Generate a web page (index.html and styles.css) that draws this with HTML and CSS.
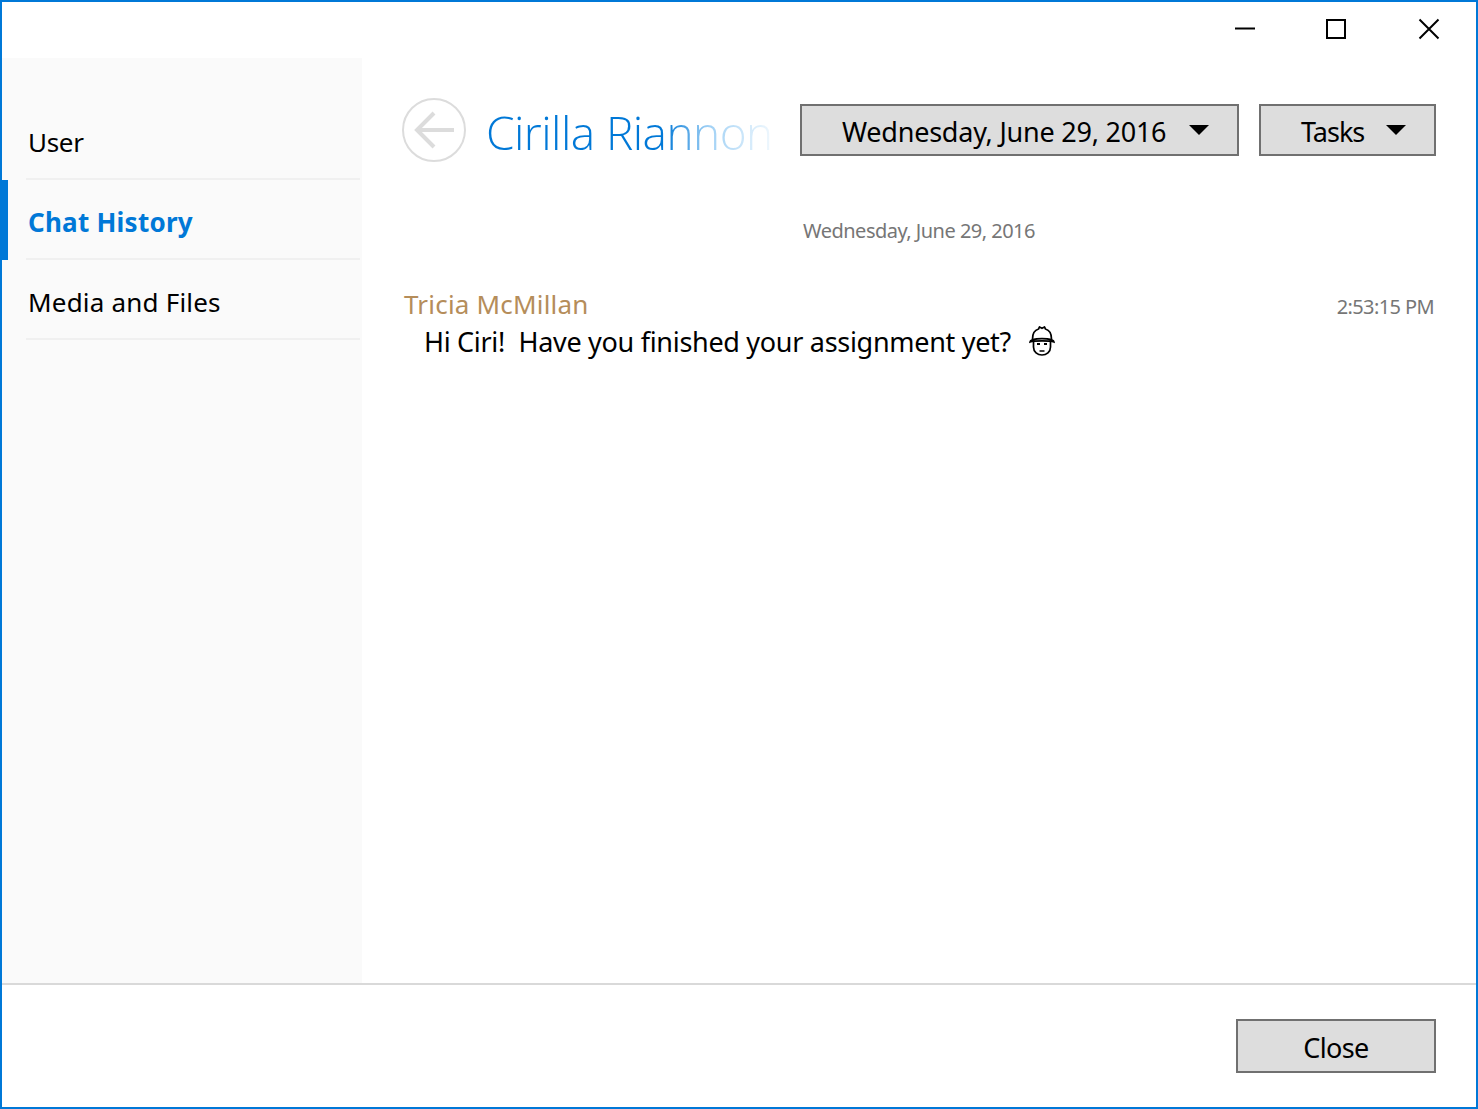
FILE: index.html
```html
<!DOCTYPE html>
<html lang="en">
<head>
<meta charset="utf-8">
<title>Chat History</title>
<link rel="stylesheet" href="styles.css">
</head>
<body>
<div class="window">
  <div class="titlebar">
    <button class="winbtn" aria-label="Minimize"><svg width="22" height="22" viewBox="0 0 22 22"><path d="M3 10.500h20" stroke="#000" stroke-width="2"/></svg></button>
    <button class="winbtn" aria-label="Maximize"><svg width="22" height="22" viewBox="0 0 22 22"><rect x="2" y="2" width="18" height="18" fill="none" stroke="#000" stroke-width="2"/></svg></button>
    <button class="winbtn" aria-label="Close window"><svg width="22" height="22" viewBox="0 0 22 22"><path d="M1.500 1.500l19 19M20.500 1.500l-19 19" stroke="#000" stroke-width="2"/></svg></button>
  </div>
  <div class="body">
    <nav class="sidebar">
      <div class="navitem">User</div>
      <div class="navitem active">Chat History</div>
      <div class="navitem">Media and Files</div>
    </nav>
    <main class="content">
      <header class="header">
        <div class="back"><svg width="64" height="64" viewBox="0 0 64 64"><circle cx="32" cy="32" r="31" fill="none" stroke="#dcdcdc" stroke-width="2"/><path d="M52 32H16M32 15L15 32l17 17" fill="none" stroke="#dcdcdc" stroke-width="4"/></svg></div>
        <h1 class="name">Cirilla Riannon</h1>
        <button class="combo date"><span>Wednesday, June 29, 2016</span><i class="caret"></i></button>
        <button class="combo tasks"><span>Tasks</span><i class="caret"></i></button>
      </header>
      <div class="daystamp">Wednesday, June 29, 2016</div>
      <div class="msg">
        <div class="msghead"><span class="sender">Tricia McMillan</span><span class="time">2:53:15 PM</span></div>
        <div class="msgtext"><span class="msgcopy">Hi Ciri!&nbsp; Have you finished your assignment yet?</span>
          <svg class="emoji" width="28" height="32" viewBox="0 0 28 32"><g fill="none" stroke="#000" stroke-width="1.700"><path d="M4.500 13C4.500 7 7 4 10.500 3L11.500 1 14 2.200 16.500 1 17.500 3C21 4 23.500 7 23.500 13"/><path d="M2 16C2 11.500 26 11.500 26 16 22 14.500 6 14.500 2 16z"/><path d="M5.500 16v5c0 5 4 8 8.500 8s8.500-3 8.500-8v-5"/></g><path d="M9 17h3v2H9zM16 17h3v2h-3z"/><path d="M11.500 25h5" stroke="#000" stroke-width="1.500"/></svg>
        </div>
      </div>
    </main>
  </div>
  <footer class="footer"><button class="combo close">Close</button></footer>
</div>
</body>
</html>
```
FILE: styles.css
```css
* { box-sizing: border-box; }
html, body { margin: 0; padding: 0; }
body { width: 1478px; height: 1109px; background: #fff; font-family: "Noto Sans", "Open Sans", sans-serif; color: #000; overflow: hidden; }
.window { width: 1478px; height: 1109px; border: 2px solid #0078d7; display: flex; flex-direction: column; position: relative; }
.titlebar { height: 56px; flex: none; display: flex; justify-content: flex-end; gap: 71px; padding: 16px 36px 0 0; }
.winbtn { width: 22px; height: 22px; padding: 0; border: 0; background: none; display: block; }
.winbtn svg { display: block; overflow: visible; }
.body { flex: 1; display: flex; min-height: 0; }
.sidebar { width: 360px; flex: none; background: #fafafa; padding-top: 42px; }
.navitem { height: 80px; margin-left: 24px; margin-right: 2px; border-bottom: 2px solid #f0f0f0; font-size: 26px; letter-spacing: 0.2px; padding: 24px 0 0 2px; line-height: 36px; position: relative; }
.navitem:first-child { letter-spacing: -0.3px; }
.navitem.active { color: #0078d7; font-weight: 700; letter-spacing: 0.25px; }
.navitem.active::before { content: ""; position: absolute; left: -26px; top: 0; width: 8px; height: 80px; background: #0078d7; }
.content { flex: 1; padding: 40px 40px 0 40px; min-width: 0; }
.header { display: flex; align-items: flex-start; height: 64px; }
.back { width: 64px; height: 64px; flex: none; }
.back svg { display: block; }
.name { width: 285px; height: 64px; margin: 0 29px 0 20px; flex: none; font-family: "Open Sans", sans-serif; font-weight: 300; font-size: 46px; letter-spacing: -0.55px; line-height: 69px; white-space: nowrap; overflow: hidden; background: linear-gradient(90deg, #0078d7 0, #0078d7 178px, #9fd0f5 222px, #ecf6fd 283px, #fff 285px); -webkit-background-clip: text; background-clip: text; color: transparent; }
.combo { height: 52px; background: #dddddd; border: 2px solid #707070; font: inherit; font-size: 27px; color: #000; padding: 0; letter-spacing: -0.65px; }
.header .combo { margin-top: 6px; display: flex; align-items: center; flex: none; line-height: 50px; padding-top: 4px; }
.date { width: 439px; padding-left: 40px; margin-right: 20px; letter-spacing: -0.23px; }
.tasks { width: 177px; padding-left: 40px; letter-spacing: -1px; }
.date .caret { margin-left: 23px; }
.tasks .caret { margin-left: 22px; }
.caret { display: block; width: 0; height: 0; border-left: 10px solid transparent; border-right: 10px solid transparent; border-top: 10px solid #000; margin-top: -4px; flex: none; }
.daystamp { margin-top: 54px; text-align: center; font-size: 20px; line-height: 30px; color: #767676; letter-spacing: -0.52px; width: 1034px; }
.msg { margin-top: 40px; }
.msghead { display: flex; justify-content: space-between; align-items: baseline; padding: 0 2px; line-height: 36px; }
.sender { font-size: 26px; color: #b58d5a; letter-spacing: 0.2px; }
.time { font-size: 20px; color: #767676; letter-spacing: -0.6px; }
.msgtext { display: flex; align-items: center; padding-left: 22px; height: 32px; font-size: 27px; letter-spacing: -0.3px; }
.msgcopy { white-space: pre; }
.emoji { margin: 2px 0 0 17px; display: block; flex: none; }
.footer { height: 124px; flex: none; border-top: 2px solid #d9d9d9; padding: 34px 40px 0 0; display: flex; justify-content: flex-end; align-items: flex-start; }
.close { width: 200px; height: 54px; line-height: 50px; padding-top: 2px; }
```
